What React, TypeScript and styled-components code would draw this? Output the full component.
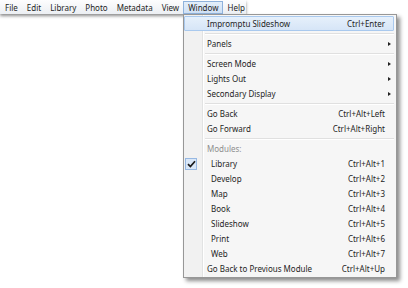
import React from "react";
import styled, { createGlobalStyle } from "styled-components";

type Entry =
  | { kind: "sep" }
  | {
      kind: "item";
      label: string;
      shortcut?: string;
      submenu?: boolean;
      hot?: boolean;
      muted?: boolean;
      indent?: boolean;
      checked?: boolean;
    };

const topMenus = ["File", "Edit", "Library", "Photo", "Metadata", "View", "Window", "Help"];

const entries: Entry[] = [
  { kind: "item", label: "Impromptu Slideshow", shortcut: "Ctrl+Enter", hot: true },
  { kind: "sep" },
  { kind: "item", label: "Panels", submenu: true },
  { kind: "sep" },
  { kind: "item", label: "Screen Mode", submenu: true },
  { kind: "item", label: "Lights Out", submenu: true },
  { kind: "item", label: "Secondary Display", submenu: true },
  { kind: "sep" },
  { kind: "item", label: "Go Back", shortcut: "Ctrl+Alt+Left" },
  { kind: "item", label: "Go Forward", shortcut: "Ctrl+Alt+Right" },
  { kind: "sep" },
  { kind: "item", label: "Modules:", muted: true },
  { kind: "item", label: "Library", shortcut: "Ctrl+Alt+1", indent: true, checked: true },
  { kind: "item", label: "Develop", shortcut: "Ctrl+Alt+2", indent: true },
  { kind: "item", label: "Map", shortcut: "Ctrl+Alt+3", indent: true },
  { kind: "item", label: "Book", shortcut: "Ctrl+Alt+4", indent: true },
  { kind: "item", label: "Slideshow", shortcut: "Ctrl+Alt+5", indent: true },
  { kind: "item", label: "Print", shortcut: "Ctrl+Alt+6", indent: true },
  { kind: "item", label: "Web", shortcut: "Ctrl+Alt+7", indent: true },
  { kind: "item", label: "Go Back to Previous Module", shortcut: "Ctrl+Alt+Up" },
];

export default function App() {
  return (
    <>
      <GlobalStyle />
      <Screen>
        <MenuBar>
          {topMenus.map((name) => (
            <TopItem key={name} $open={name === "Window"}>
              {name}
            </TopItem>
          ))}
        </MenuBar>
        <Dropdown>
          {entries.map((entry, i) =>
            entry.kind === "sep" ? (
              <Separator key={i} />
            ) : (
              <Item key={i} $hot={entry.hot}>
                <Gutter>
                  {entry.checked ? (
                    <CheckBox>
                      <svg width="9" height="8" viewBox="0 0 9 8">
                        <path
                          d="M1 4.2 L3.4 6.6 L8 1.2"
                          fill="none"
                          stroke="#1a1a1a"
                          strokeWidth="1.7"
                        />
                      </svg>
                    </CheckBox>
                  ) : null}
                </Gutter>
                <Label $muted={entry.muted} $indent={entry.indent}>
                  {entry.label}
                </Label>
                <Shortcut>{entry.shortcut ?? ""}</Shortcut>
                <ArrowCell>{entry.submenu ? <Arrow /> : null}</ArrowCell>
              </Item>
            )
          )}
        </Dropdown>
      </Screen>
    </>
  );
}

const GlobalStyle = createGlobalStyle`
  html, body {
    margin: 0;
    padding: 0;
    background: #ffffff;
  }
  body {
    font-family: "Noto Sans", "Open Sans", sans-serif;
    font-size: 8px;
    color: #1e1e1e;
  }
`;

const Screen = styled.div`
  position: relative;
  width: 408px;
  height: 288px;
  overflow: hidden;
  background: #ffffff;
`;

const MenuBar = styled.div`
  display: flex;
  align-items: center;
  gap: 1px;
  width: 246px;
  height: 14px;
  padding-left: 1px;
  box-sizing: border-box;
  background: linear-gradient(#fdfdfe, #eceff3);
  box-shadow: 0 2px 3px rgba(0, 0, 0, 0.45);
`;

const TopItem = styled.div<{ $open?: boolean }>`
  display: flex;
  align-items: center;
  height: 13px;
  padding: 0 4px;
  box-sizing: border-box;
  line-height: 13px;
  white-space: nowrap;
  border: 1px solid ${(p) => (p.$open ? "#8fb2dc" : "transparent")};
  background: ${(p) => (p.$open ? "linear-gradient(#e3eefa, #cfe0f4)" : "transparent")};
  margin: 0 -1px;
`;

const Dropdown = styled.div`
  position: absolute;
  left: 183px;
  top: 14px;
  width: 214px;
  box-sizing: border-box;
  padding: 1px 2px 1px 0;
  border: 1px solid #979797;
  background:
    linear-gradient(90deg, transparent 18px, #e2e3e3 18px, #e2e3e3 19px, #ffffff 19px, #ffffff 20px, transparent 20px),
    linear-gradient(90deg, #f1f1f1 18px, #f6f6f6 18px);
  box-shadow: 3px 3px 4px rgba(0, 0, 0, 0.45);
`;

const Item = styled.div<{ $hot?: boolean }>`
  display: grid;
  grid-template-columns: 22px 1fr auto 8px;
  align-items: center;
  height: 15px;
  box-sizing: border-box;
  line-height: 13px;
  white-space: nowrap;
  border: 1px solid ${(p) => (p.$hot ? "#a9c9ee" : "transparent")};
  border-radius: 1px;
  background: ${(p) => (p.$hot ? "linear-gradient(#e6f0fb, #d6e5f7)" : "transparent")};
`;

const Gutter = styled.div`
  display: flex;
  align-items: center;
  height: 13px;
  padding-left: 0;
`;

const CheckBox = styled.div`
  display: flex;
  align-items: center;
  justify-content: center;
  width: 12px;
  height: 12px;
  margin-left: 0;
  box-sizing: border-box;
  border: 1px solid #97b8e2;
  background: #d9e7f8;
`;

const Label = styled.span<{ $muted?: boolean; $indent?: boolean }>`
  padding-left: ${(p) => (p.$indent ? "4px" : "0")};
  color: ${(p) => (p.$muted ? "#8e8e8e" : "#1e1e1e")};
`;

const Shortcut = styled.span`
  text-align: right;
`;

const ArrowCell = styled.div`
  display: flex;
  align-items: center;
  justify-content: center;
`;

const Arrow = styled.span`
  width: 0;
  height: 0;
  border-top: 2.5px solid transparent;
  border-bottom: 2.5px solid transparent;
  border-left: 3px solid #222;
`;

const Separator = styled.div`
  height: 5px;
  margin-left: 21px;
  background: linear-gradient(transparent 2px, #e0e0e0 2px, #e0e0e0 3px, #ffffff 3px, #ffffff 4px, transparent 4px);
`;
